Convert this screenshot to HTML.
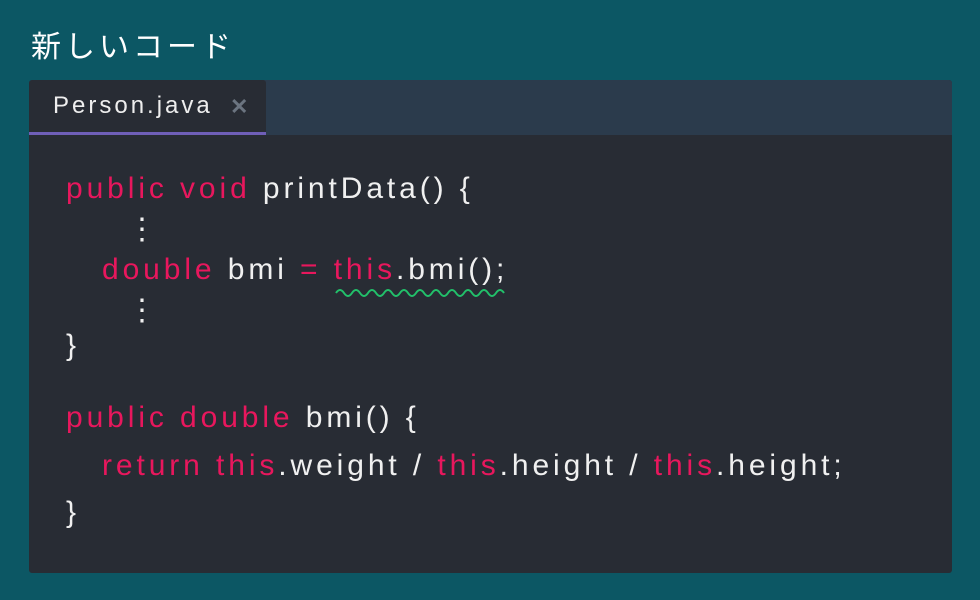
<!DOCTYPE html>
<html><head><meta charset="utf-8"><style>
body{margin:0;width:980px;height:600px;background:#0c5764;position:relative;overflow:hidden;font-family:"Liberation Sans","Noto Sans CJK JP",sans-serif}
.title{position:absolute;left:31px;top:22px;color:#fff;font-size:30px;letter-spacing:4px}
.panel{position:absolute;left:29px;top:80px;width:923px;height:493px;background:#282c34;border-radius:3px;overflow:hidden}
.bar{position:absolute;left:0;top:0;width:923px;height:55px;background:#2b3b4c}
.tab{position:absolute;left:0;top:0;width:237px;height:52px;background:#282c34;border-bottom:3px solid #6f5fb8;border-radius:3px 3px 0 0}
.tab span{position:absolute;left:24px;top:12px;color:#eee;font-size:24px;letter-spacing:3px}
.tab b{position:absolute;left:201px;top:14px;color:#6b7480;font-size:22px}
.l{position:absolute;color:#f0f0f0;font-size:30px;letter-spacing:3.9px;white-space:pre;line-height:30px}
.k{color:#e8175d}
</style></head><body>
<div class="title">新しいコード</div>
<div class="panel">
<div class="bar"></div>
<div class="tab"><span>Person.java</span><b>✕</b></div>
</div>
<div class="l" style="left:66px;top:174px"><span class="k">public void</span> printData() {</div>
<div class="l" style="left:127px;top:215px">⋮</div>
<div class="l" style="left:102px;top:255px"><span class="k">double</span> bmi <span class="k">=</span> <span class="k">this</span>.bmi();</div>
<svg style="position:absolute;left:334px;top:286px" width="172" height="12"><path d="M2 7 q4 -6 8 0 t8 0 t8 0 t8 0 t8 0 t8 0 t8 0 t8 0 t8 0 t8 0 t8 0 t8 0 t8 0 t8 0 t8 0 t8 0 t8 0 t8 0 t8 0 t8 0 t8 0" fill="none" stroke="#22c06a" stroke-width="2"/></svg>
<div class="l" style="left:127px;top:296px">⋮</div>
<div class="l" style="left:66px;top:331px">}</div>
<div class="l" style="left:66px;top:403px"><span class="k">public double</span> bmi() {</div>
<div class="l" style="left:102px;top:451px"><span class="k">return this</span>.weight / <span class="k">this</span>.height / <span class="k">this</span>.height;</div>
<div class="l" style="left:66px;top:498px">}</div>
</body></html>
